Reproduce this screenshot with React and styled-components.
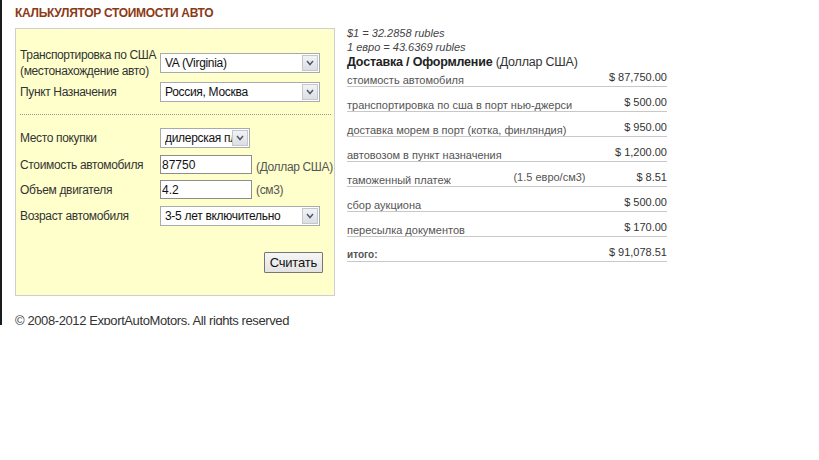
import React from 'react';
import styled, { createGlobalStyle } from 'styled-components';

const GlobalStyle = createGlobalStyle`
  html, body {
    margin: 0;
    padding: 0;
    background: #fff;
  }
  body {
    font-family: 'Liberation Sans', Arial, sans-serif;
    color: #333;
  }
`;

const Page = styled.div`
  height: 325px;
  overflow: hidden;
  border-left: 2px solid #1b1b1b;
  padding-left: 13px;
`;

const Title = styled.h1`
  margin: 0;
  padding-top: 6px;
  height: 22px;
  font-size: 12px;
  line-height: 14px;
  font-weight: 700;
  letter-spacing: -0.3px;
  color: #8b3a16;
`;

const Main = styled.div`
  display: flex;
  align-items: flex-start;
  gap: 12px;
`;

const FormBox = styled.div`
  width: 312px;
  padding: 18px 2px 22px 4px;
  background: #ffffcc;
  border: 1px solid #cfcfcf;
`;

const Row = styled.div`
  display: flex;
  align-items: center;
  margin-top: ${(p) => p.$gap || 0}px;
`;

const Label = styled.div`
  width: 140px;
  flex: none;
  font-size: 12px;
  line-height: 16px;
  letter-spacing: -0.35px;
  white-space: nowrap;
  color: #333;
`;

const SelectBox = styled.div`
  display: flex;
  align-items: center;
  flex: none;
  width: ${(p) => p.$width}px;
  height: 20px;
  box-sizing: border-box;
  border: 1px solid #a7abb0;
  background: #fff;
`;

const NativeSelect = styled.select`
  flex: 1;
  min-width: 0;
  height: 18px;
  border: 0;
  padding: 0 0 0 4px;
  appearance: none;
  background: transparent;
  font-family: 'Liberation Sans', Arial, sans-serif;
  font-size: 12px;
  letter-spacing: -0.3px;
  color: #111;
  outline: none;
`;

const ArrowBox = styled.div`
  flex: none;
  width: 16px;
  height: 16px;
  margin-right: 1px;
  box-sizing: border-box;
  border: 1px solid #c4c8cc;
  background: linear-gradient(#f2f3f5, #dcdfe3);
  display: flex;
  align-items: center;
  justify-content: center;
`;

const TextInput = styled.input`
  flex: none;
  width: 92px;
  height: 19px;
  box-sizing: border-box;
  border: 1px solid #8d8d8d;
  padding: 0 0 0 1px;
  font-family: 'Liberation Sans', Arial, sans-serif;
  font-size: 12px;
  color: #111;
  background: #fff;
`;

const Suffix = styled.span`
  flex: none;
  margin-left: 4px;
  padding-top: ${(p) => p.$drop || 0}px;
  font-size: 12px;
  letter-spacing: -0.35px;
  white-space: nowrap;
  color: #555;
`;

const Divider = styled.div`
  margin: 12px 1px 0 0;
  border-top: 1px dotted #9a9a8a;
`;

const ButtonRow = styled.div`
  display: flex;
  justify-content: flex-end;
  margin-top: 26px;
  padding-right: 9px;
`;

const Button = styled.button`
  height: 21px;
  padding: 0 5px;
  border: 1px solid #767676;
  border-radius: 1px;
  background: linear-gradient(#f6f6f6, #e3e3e3);
  font-family: 'Liberation Sans', Arial, sans-serif;
  font-size: 13px;
  letter-spacing: -0.2px;
  color: #111;
`;

const Footer = styled.div`
  padding-top: 17px;
  font-size: 13px;
  line-height: 15px;
  letter-spacing: -0.4px;
  white-space: nowrap;
  color: #333;
`;

const Summary = styled.div`
  width: 320px;
  margin-top: -2px;
`;

const Rate = styled.div`
  font-size: 11px;
  line-height: 14px;
  font-style: italic;
  color: #444;
`;

const Heading = styled.div`
  font-size: 12.5px;
  line-height: 16px;
  font-weight: 700;
  letter-spacing: -0.2px;
  color: #222;

  span {
    font-weight: 400;
    color: #333;
  }
`;

const CostRow = styled.div`
  display: flex;
  height: ${(p) => (p.$first ? 16 : 24)}px;
  border-bottom: 1px solid #c8c8c8;
`;

const CostLabel = styled.div`
  flex: 1;
  align-self: flex-end;
  font-size: ${(p) => (p.$bold ? 10 : 11)}px;
  font-weight: ${(p) => (p.$bold ? 700 : 400)};
  line-height: 12px;
  color: #555;
`;

const CostNote = styled.div`
  width: 123px;
  flex: none;
  align-self: flex-end;
  padding-bottom: 3px;
  font-size: 11px;
  line-height: 12px;
  color: #555;
`;

const CostValue = styled.div`
  flex: none;
  align-self: flex-end;
  padding-bottom: 2px;
  font-size: 11px;
  line-height: 13px;
  color: #333;
  text-align: right;
`;

const Chevron = () => (
  <svg width="8" height="6" viewBox="0 0 8 6">
    <polyline points="1,1 4,4.5 7,1" fill="none" stroke="#4a5a70" strokeWidth="1.5" />
  </svg>
);

const Select = ({ width, value, options }) => (
  <SelectBox $width={width}>
    <NativeSelect defaultValue={value}>
      {options.map((o) => (
        <option key={o}>{o}</option>
      ))}
    </NativeSelect>
    <ArrowBox>
      <Chevron />
    </ArrowBox>
  </SelectBox>
);

const costs = [
  { label: 'стоимость автомобиля', value: '$ 87,750.00' },
  { label: 'транспортировка по сша в порт нью-джерси', value: '$ 500.00' },
  { label: 'доставка морем в порт (котка, финляндия)', value: '$ 950.00' },
  { label: 'автовозом в пункт назначения', value: '$ 1,200.00' },
  { label: 'таможенный платеж', note: '(1.5 евро/см3)', value: '$ 8.51' },
  { label: 'сбор аукциона', value: '$ 500.00' },
  { label: 'пересылка документов', value: '$ 170.00' },
  { label: 'итого:', value: '$ 91,078.51', bold: true },
];

export default function App() {
  return (
    <>
      <GlobalStyle />
      <Page>
        <Title>КАЛЬКУЛЯТОР СТОИМОСТИ АВТО</Title>
        <Main>
          <div>
            <FormBox>
              <Row>
                <Label>
                  Транспортировка по США
                  <br />
                  (местонахождение авто)
                </Label>
                <Select width={160} value="VA (Virginia)" options={['VA (Virginia)', 'NY (New York)', 'NJ (New Jersey)']} />
              </Row>
              <Row $gap={3}>
                <Label>Пункт Назначения</Label>
                <Select width={160} value="Россия, Москва" options={['Россия, Москва', 'Россия, Санкт-Петербург']} />
              </Row>
              <Divider />
              <Row $gap={13}>
                <Label>Место покупки</Label>
                <Select width={90} value="дилерская площадка" options={['дилерская площадка', 'аукцион']} />
              </Row>
              <Row $gap={7}>
                <Label>Стоимость автомобиля</Label>
                <TextInput defaultValue="87750" />
                <Suffix $drop={4}>(Доллар США)</Suffix>
              </Row>
              <Row $gap={6}>
                <Label>Объем двигателя</Label>
                <TextInput defaultValue="4.2" />
                <Suffix>(см3)</Suffix>
              </Row>
              <Row $gap={7}>
                <Label>Возраст автомобиля</Label>
                <Select width={160} value="3-5 лет включительно" options={['до 3 лет', '3-5 лет включительно', 'старше 5 лет']} />
              </Row>
              <ButtonRow>
                <Button>Считать</Button>
              </ButtonRow>
            </FormBox>
            <Footer>© 2008-2012 ExportAutoMotors. All rights reserved</Footer>
          </div>
          <Summary>
            <Rate>$1 = 32.2858 rubles</Rate>
            <Rate>1 евро = 43.6369 rubles</Rate>
            <Heading>
              Доставка / Оформление <span>(Доллар США)</span>
            </Heading>
            {costs.map((c, i) => (
              <CostRow key={c.label} $first={i === 0}>
                <CostLabel $bold={c.bold}>{c.label}</CostLabel>
                {c.note && <CostNote>{c.note}</CostNote>}
                <CostValue>{c.value}</CostValue>
              </CostRow>
            ))}
          </Summary>
        </Main>
      </Page>
    </>
  );
}
